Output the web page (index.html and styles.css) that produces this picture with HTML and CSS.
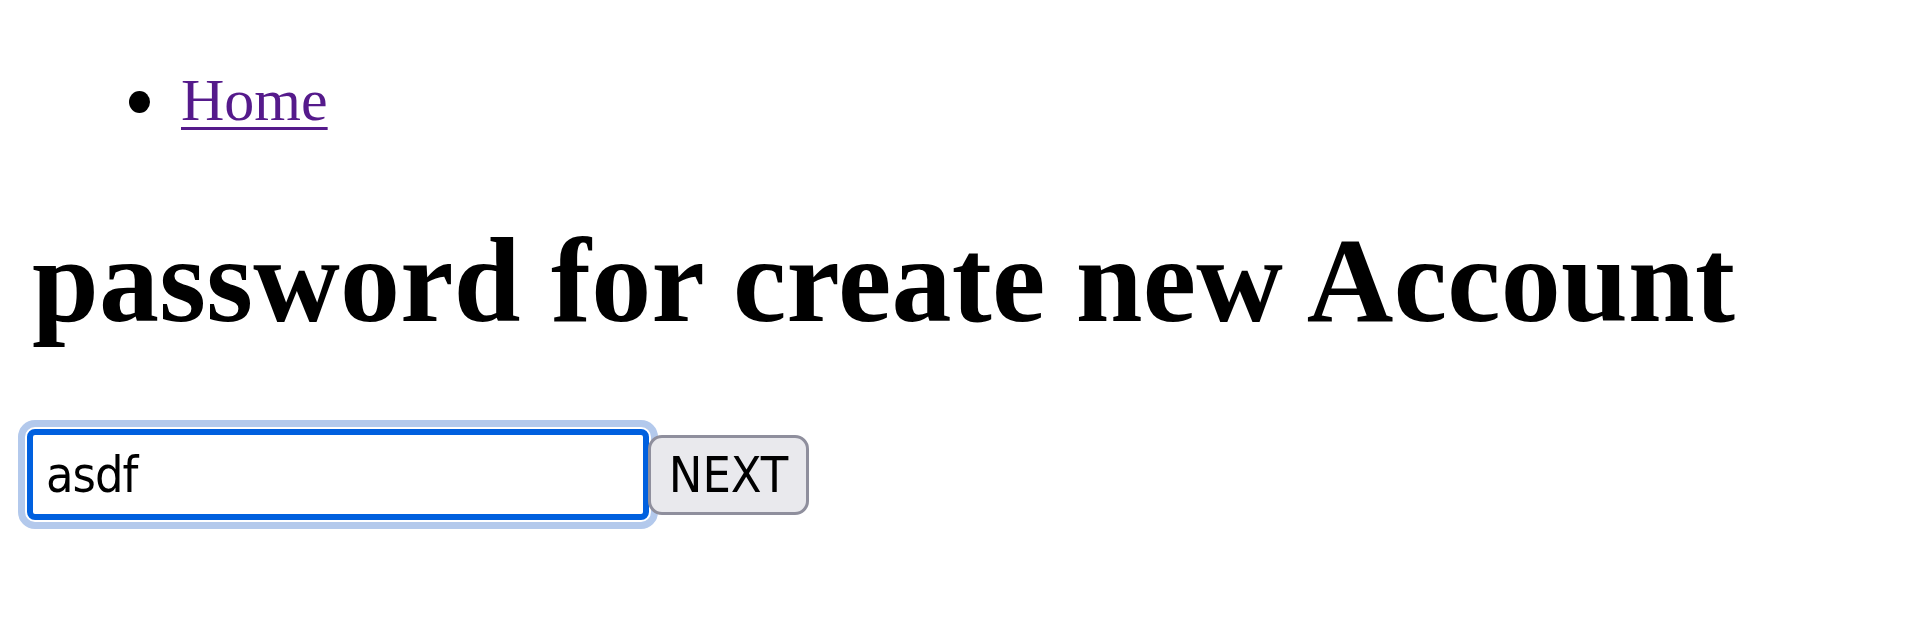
FILE: index.html
```html
<!DOCTYPE html>
<html>
<head>
<meta charset="utf-8">
<title>password</title>
<link rel="stylesheet" href="styles.css">
</head>
<body>
<ul class="nav">
  <li class="nav-item"><a class="nav-link" href="#">Home</a></li>
</ul>
<h1 class="title">password for create new Account</h1>
<form class="pw-form" onsubmit="return false">
  <input class="pw-input" type="text" value="asdf">
  <button class="pw-button" type="submit">NEXT</button>
</form>
</body>
</html>
```

FILE: styles.css
```css
html, body {
  margin: 0;
  padding: 0;
  background: #ffffff;
}
body {
  font-family: "Liberation Serif", "Times New Roman", serif;
  color: #000000;
}
.nav {
  margin: 66px 0 0 0;
  padding: 0 0 0 129px;
  font-size: 60px;
  list-style: none;
}
.nav-item {
  display: flex;
  align-items: center;
}
.nav-item::before {
  content: "";
  width: 21px;
  height: 22px;
  margin: 2px 31px 0 0;
  border-radius: 50%;
  background: #000000;
}
.nav-link {
  color: #551a8b;
  text-decoration: underline;
  text-decoration-thickness: 3px;
  text-underline-offset: 7px;
}
.title {
  margin: 77px 0 0 0;
  padding-left: 32px;
  font-size: 120px;
  font-weight: bold;
  letter-spacing: 0.25px;
  white-space: nowrap;
}
.pw-form {
  display: flex;
  align-items: center;
  margin: 79px 0 40px 27px;
}
.pw-input {
  box-sizing: border-box;
  width: 622px;
  height: 91px;
  margin: 0;
  padding: 0 0 0 13px;
  border: 6px solid #0060df;
  border-radius: 8px;
  outline: 7px solid #b3c9ec;
  outline-offset: 2px;
  font-family: "DejaVu Sans Condensed", "DejaVu Sans", sans-serif;
  font-size: 50px;
  letter-spacing: -1px;
  color: #000000;
  background: #ffffff;
}
.pw-button {
  position: relative;
  box-sizing: border-box;
  width: 161px;
  height: 80px;
  margin: 0 0 0 -1px;
  padding: 0;
  border: 3px solid #8f8f9d;
  border-radius: 14px;
  background: #e9e9ed;
  color: #000000;
  font-family: "DejaVu Sans Condensed", "DejaVu Sans", sans-serif;
  font-size: 50px;
}
```
